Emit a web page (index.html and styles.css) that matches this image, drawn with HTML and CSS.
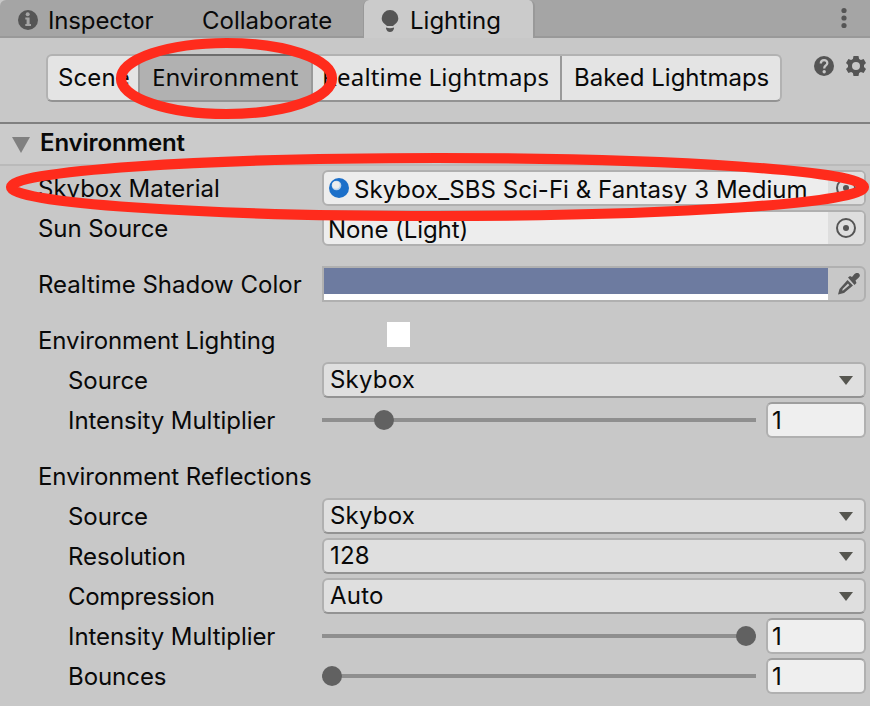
FILE: index.html
```html
<!DOCTYPE html>
<html lang="en">
<head>
<meta charset="utf-8">
<title>Lighting</title>
<link rel="stylesheet" href="styles.css">
</head>
<body>
<div class="window">
  <nav class="tabs">
    <div class="tab tab-inspector">
      <svg width="20" height="20" viewBox="0 0 20 20"><circle cx="10" cy="10" r="10" fill="#555"/><circle cx="9.700" cy="4.300" r="2" fill="#a5a5a5"/><path d="M7.300 7.500h4.300v6.500H13v2H7.300v-2h1.300V9.500H7.300z" fill="#a5a5a5"/></svg>
      <span>Inspector</span>
    </div>
    <div class="tab tab-collaborate"><span>Collaborate</span></div>
    <div class="tab tab-lighting">
      <svg width="18" height="23" viewBox="0 0 18 23"><path d="M9 0a8.300 8.300 0 0 1 8.300 8.300c0 4-3.300 6-5.300 7.700H6c-2-1.700-5.300-3.700-5.300-7.700A8.300 8.300 0 0 1 9 0z" fill="#555"/><path d="M5 17.500q4 1.600 8 0v1q-1 3.500-4 3.500t-4-3.500z" fill="#555"/></svg>
      <span>Lighting</span>
    </div>
    <svg class="kebab" width="6" height="22" viewBox="0 0 6 22" fill="#555"><circle cx="3" cy="3.500" r="2.600"/><circle cx="3" cy="11" r="2.600"/><circle cx="3" cy="18.500" r="2.600"/></svg>
  </nav>

  <header class="toolbar">
    <div class="modes">
      <div class="mode mode-scene"><span>Scene</span></div>
      <div class="mode mode-env"><span>Environment</span></div>
      <div class="mode mode-realtime"><span>Realtime Lightmaps</span></div>
      <div class="mode mode-baked"><span>Baked Lightmaps</span></div>
    </div>
    <div class="tools">
      <svg width="20" height="20" viewBox="0 0 20 20"><circle cx="10" cy="10" r="10" fill="#555"/><path d="M6.800 7.500C6.800 3 13.500 3.200 13.300 7.200C13.200 9.500 10.200 9.600 10.200 12.500" fill="none" stroke="#c8c8c8" stroke-width="2.300"/><circle cx="10.200" cy="15.800" r="1.700" fill="#c8c8c8"/></svg>
      <svg width="20" height="20" viewBox="0 0 20 20"><path fill="#555" fill-rule="evenodd" d="M7.500 0h5l.6 3 1.800 1 2.700-1L20 7l-2 2v2l2 2-2.400 4-2.700-1-1.800 1-.6 3h-5l-.6-3-1.800-1-2.700 1L0 13l2-2V9L0 7l2.400-4 2.700 1 1.800-1zM10 6a4 4 0 1 0 0 8 4 4 0 0 0 0-8z"/></svg>
    </div>
  </header>

  <div class="section">
    <svg width="18" height="16" viewBox="0 0 18 16"><path d="M0 0h18L9 16z" fill="#808080"/></svg>
    <h1>Environment</h1>
  </div>

  <main class="props">
    <div class="row">
      <label class="l-skymat">Skybox Material</label>
      <div class="object">
        <div class="object-name">
          <svg width="20" height="20" viewBox="0 0 20 20"><circle cx="10" cy="10" r="10" fill="#1b6fc9"/><circle cx="7.500" cy="7.500" r="4.800" fill="#b9d3ec"/><circle cx="7" cy="7" r="3.800" fill="#ededed"/></svg>
          <span class="v-sky">Skybox_SBS Sci-Fi &amp; Fantasy 3 Medium</span>
        </div>
        <div class="picker"><svg width="20" height="20" viewBox="0 0 20 20"><circle cx="10" cy="10" r="9" fill="none" stroke="#555" stroke-width="2"/><circle cx="10" cy="10" r="3" fill="#555"/></svg></div>
      </div>
    </div>
    <div class="row">
      <label class="l-sun">Sun Source</label>
      <div class="object">
        <div class="object-name"><span class="v-none">None (Light)</span></div>
        <div class="picker"><svg width="20" height="20" viewBox="0 0 20 20"><circle cx="10" cy="10" r="9" fill="none" stroke="#555" stroke-width="2"/><circle cx="10" cy="10" r="3" fill="#555"/></svg></div>
      </div>
    </div>
    <div class="row gap">
      <label class="l-shadow">Realtime Shadow Color</label>
      <div class="color">
        <div class="swatch"></div>
        <div class="dropper"><svg width="22" height="22" viewBox="0 0 22 22" fill="#555"><path d="M10 4.500l2-1.500 2 1 2.500-3q3-2.500 4.800 0 1.500 2-1 4L17.500 7.500l1 2.500-2 2z"/><path fill-rule="evenodd" d="M9.500 7l5.500 5.500L6 20l-6 1.500L1.500 16zM10 10.500L4.500 16v2l6.800-5.700z"/></svg></div>
      </div>
    </div>
    <div class="row gap">
      <label class="l-lighting">Environment Lighting</label>
      <div class="patch"></div>
    </div>
    <div class="row sub">
      <label class="l-source">Source</label>
      <div class="select"><span>Skybox</span><i></i></div>
    </div>
    <div class="row sub">
      <label class="l-intensity">Intensity Multiplier</label>
      <div class="slider"><b class="at-low"></b></div>
      <div class="number">1</div>
    </div>
    <div class="row gap"><label class="l-reflections">Environment Reflections</label></div>
    <div class="row sub">
      <label class="l-source">Source</label>
      <div class="select"><span>Skybox</span><i></i></div>
    </div>
    <div class="row sub">
      <label class="l-resolution">Resolution</label>
      <div class="select"><span>128</span><i></i></div>
    </div>
    <div class="row sub">
      <label class="l-compression">Compression</label>
      <div class="select"><span>Auto</span><i></i></div>
    </div>
    <div class="row sub">
      <label class="l-intensity">Intensity Multiplier</label>
      <div class="slider"><b class="at-max"></b></div>
      <div class="number">1</div>
    </div>
    <div class="row sub">
      <label class="l-bounces">Bounces</label>
      <div class="slider"><b class="at-min"></b></div>
      <div class="number">1</div>
    </div>
  </main>

  <svg class="marks" width="870" height="706" viewBox="0 0 870 706" fill="none" stroke="#ff2b1c" stroke-width="10.200">
    <ellipse cx="226.500" cy="78.500" rx="105.500" ry="35.500"/>
    <ellipse cx="437.500" cy="187" rx="426.500" ry="29"/>
  </svg>
</div>
</body>
</html>
```
FILE: styles.css
```css
* { box-sizing: border-box; }
body {
  margin: 0;
  background: #c8c8c8;
  color: #090909;
  font: 375 24px/36px Inter, "Liberation Sans", sans-serif;
  letter-spacing: 0;
  white-space: nowrap;
}
svg { display: block; flex: none; }
.window { position: relative; width: 870px; height: 706px; overflow: hidden; }

.tabs {
  display: flex;
  height: 38px;
  background: #a5a5a5;
  box-shadow: inset 0 -2px #999;
  border-top-left-radius: 6px;
}
.tab { display: flex; height: 38px; line-height: 42px; }
.tab-inspector { width: 184px; padding-left: 18px; gap: 10px; letter-spacing: -0.15px; }
.tab-inspector svg { margin-top: 10px; }
.tab-collaborate { width: 179px; padding-left: 18px; }
.tab-lighting {
  width: 172px;
  padding-left: 17px;
  gap: 11px;
  background: #cbcbcb;
  border: solid #999;
  border-width: 0 2px 0 1px;
  border-radius: 6px 6px 0 0;
}
.tab-lighting svg { margin-top: 10px; }
.kebab { margin: 7px 23px 0 auto; }

.toolbar {
  display: flex;
  justify-content: space-between;
  height: 86px;
  padding: 16px 4px 0 46px;
  border-bottom: 2px solid #808080;
}
.modes {
  display: flex;
  width: 736px;
  height: 48px;
  border: 2px solid #b2b2b2;
  border-bottom-color: #939393;
  border-radius: 6px;
  background: #e4e4e4;
  line-height: 44px;
}
.mode { height: 44px; border-right: 2px solid #999; }
.mode-scene { width: 92px; padding-left: 10px; letter-spacing: 0.1px; }
.mode-env { width: 173px; padding-left: 12px; background: #b1b1b1; box-shadow: 0 -2px #6d6d6d; }
.mode-realtime { width: 249px; padding-left: 9px; }
.mode-env, .mode-realtime { font-family: "Noto Sans", sans-serif; font-weight: 400; letter-spacing: 0.15px; line-height: 42px; }
.mode-baked { padding-left: 12px; border: 0; }
.tools { display: flex; gap: 12px; padding-top: 2px; }

.section {
  display: flex;
  height: 42px;
  padding: 13px 0 0 12px;
  gap: 10px;
  background: #cbcbcb;
  border-bottom: 2px solid #bababa;
}
h1 { margin: -13px 0 0; font-size: 24px; font-weight: 600; line-height: 38px; letter-spacing: -0.15px; }

.props { padding: 4px 4px 0 38px; }
.row { display: flex; height: 36px; margin-bottom: 4px; }
.row.gap { margin-top: 20px; }
label { width: 284px; flex: none; line-height: 37px; letter-spacing: -0.06px; }
.sub { padding-left: 30px; }
.sub label { width: 254px; }
label.l-skymat, label.l-shadow { letter-spacing: 0; }
label.l-lighting { letter-spacing: -0.1px; }
label.l-compression { letter-spacing: -0.3px; }

.object, .color, .select, .number { border: 2px solid #b0b0b0; border-radius: 6px; overflow: hidden; }
.object { display: flex; width: 544px; background: #ededed; }
.object-name { display: flex; flex: 1; padding-left: 5px; gap: 5px; line-height: 35px; }
.object-name svg { margin-top: 6px; }
.v-sky { letter-spacing: 0.06px; }
.v-none { margin-left: -1px; letter-spacing: -0.08px; }
.picker { width: 36px; padding: 6px 0 0 8px; background: #dedede; }
.color { display: flex; width: 544px; border-radius: 0 6px 6px 0; }
.swatch { width: 504px; height: 32px; background: #6d7ba0; border-bottom: 6px solid #fff; }
.dropper { padding: 5px 0 0 10px; }
.patch { width: 23px; height: 25px; margin-left: 65px; background: #fff; }
.select {
  display: flex;
  justify-content: space-between;
  width: 544px;
  padding: 0 11px 0 6px;
  background: #dfdfdf;
  border-bottom-color: #939393;
  line-height: 32px;
  letter-spacing: 0.2px;
}
.select i {
  width: 14px;
  height: 9px;
  margin-top: 12px;
  background: #565650;
  clip-path: polygon(0 0, 100% 0, 50% 100%);
}
.slider { display: flex; align-items: center; width: 434px; margin-right: 10px; background: linear-gradient(#8f8f8f, #8f8f8f) center / 100% 4px no-repeat; }
.slider b { width: 20px; height: 20px; border-radius: 50%; background: #616161; }
.at-low { margin-left: 52px; }
.at-max { margin-left: 414px; }
.number { width: 100px; padding-left: 4px; background: #efefef; border-top-color: #9e9e9e; line-height: 33px; }
.marks { position: absolute; left: 0; top: 0; }
```
